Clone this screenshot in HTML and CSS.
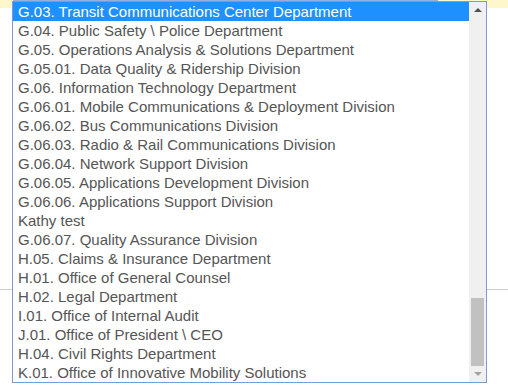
FILE: index.html
```html
<!DOCTYPE html>
<html>
<head>
<meta charset="utf-8">
<link rel="stylesheet" href="styles.css">
</head>
<body>
<div class="topbar"><div class="field"></div></div>
<div class="content"><div class="rule"></div></div>

<div class="listbox">
  <ul class="options">
    <li class="opt selected">G.03. Transit Communications Center Department</li>
    <li class="opt">G.04. Public Safety \ Police Department</li>
    <li class="opt">G.05. Operations Analysis &amp; Solutions Department</li>
    <li class="opt">G.05.01. Data Quality &amp; Ridership Division</li>
    <li class="opt">G.06. Information Technology Department</li>
    <li class="opt">G.06.01. Mobile Communications &amp; Deployment Division</li>
    <li class="opt">G.06.02. Bus Communications Division</li>
    <li class="opt">G.06.03. Radio &amp; Rail Communications Division</li>
    <li class="opt">G.06.04. Network Support Division</li>
    <li class="opt">G.06.05. Applications Development Division</li>
    <li class="opt">G.06.06. Applications Support Division</li>
    <li class="opt">Kathy test</li>
    <li class="opt">G.06.07. Quality Assurance Division</li>
    <li class="opt">H.05. Claims &amp; Insurance Department</li>
    <li class="opt">H.01. Office of General Counsel</li>
    <li class="opt">H.02. Legal Department</li>
    <li class="opt">I.01. Office of Internal Audit</li>
    <li class="opt">J.01. Office of President \ CEO</li>
    <li class="opt">H.04. Civil Rights Department</li>
    <li class="opt">K.01. Office of Innovative Mobility Solutions</li>
  </ul>
  <div class="scrollbar">
    <div class="sb-btn"><span class="arrow-up"></span></div>
    <div class="sb-track"><div class="sb-thumb"></div></div>
    <div class="sb-btn"><span class="arrow-down"></span></div>
  </div>
</div>
</body>
</html>
```

FILE: styles.css
```css
html, body {
  margin: 0;
  padding: 0;
  background: #ffffff;
  width: 508px;
  height: 392px;
  overflow: hidden;
  font-family: "Liberation Sans", Arial, sans-serif;
}

.topbar {
  height: 8px;
  background: #fff7cc;
}

.field {
  margin-left: 13px;
  width: 425px;
  height: 1px;
  background: #9aaedb;
}

.content {
  padding-top: 281px;
}

.rule {
  height: 1px;
  background: #cccccc;
}

.listbox {
  position: absolute;
  top: 1px;
  left: 12px;
  width: 475px;
  box-sizing: border-box;
  border: 1px solid #7b9bd8;
  background: #ffffff;
  display: flex;
}

.options {
  list-style: none;
  margin: 0;
  padding: 0;
  flex: 1;
}

.opt {
  height: 19px;
  line-height: 19px;
  padding-left: 5px;
  font-size: 15px;
  color: #555555;
  white-space: nowrap;
}

.opt.selected {
  background: #1e90ff;
  color: #ffffff;
}

.scrollbar {
  width: 17px;
  background: #f0f0f0;
  display: flex;
  flex-direction: column;
}

.sb-btn {
  height: 16px;
  display: flex;
  align-items: center;
  justify-content: center;
}

.arrow-up {
  width: 0;
  height: 0;
  border-left: 4px solid transparent;
  border-right: 4px solid transparent;
  border-bottom: 4px solid #505050;
}

.arrow-down {
  width: 0;
  height: 0;
  border-left: 4px solid transparent;
  border-right: 4px solid transparent;
  border-top: 4px solid #a3a3a3;
}

.sb-track {
  flex: 1;
  display: flex;
  flex-direction: column;
  justify-content: flex-end;
  align-items: center;
}

.sb-thumb {
  width: 13px;
  height: 68px;
  background: #c1c1c1;
}
```
